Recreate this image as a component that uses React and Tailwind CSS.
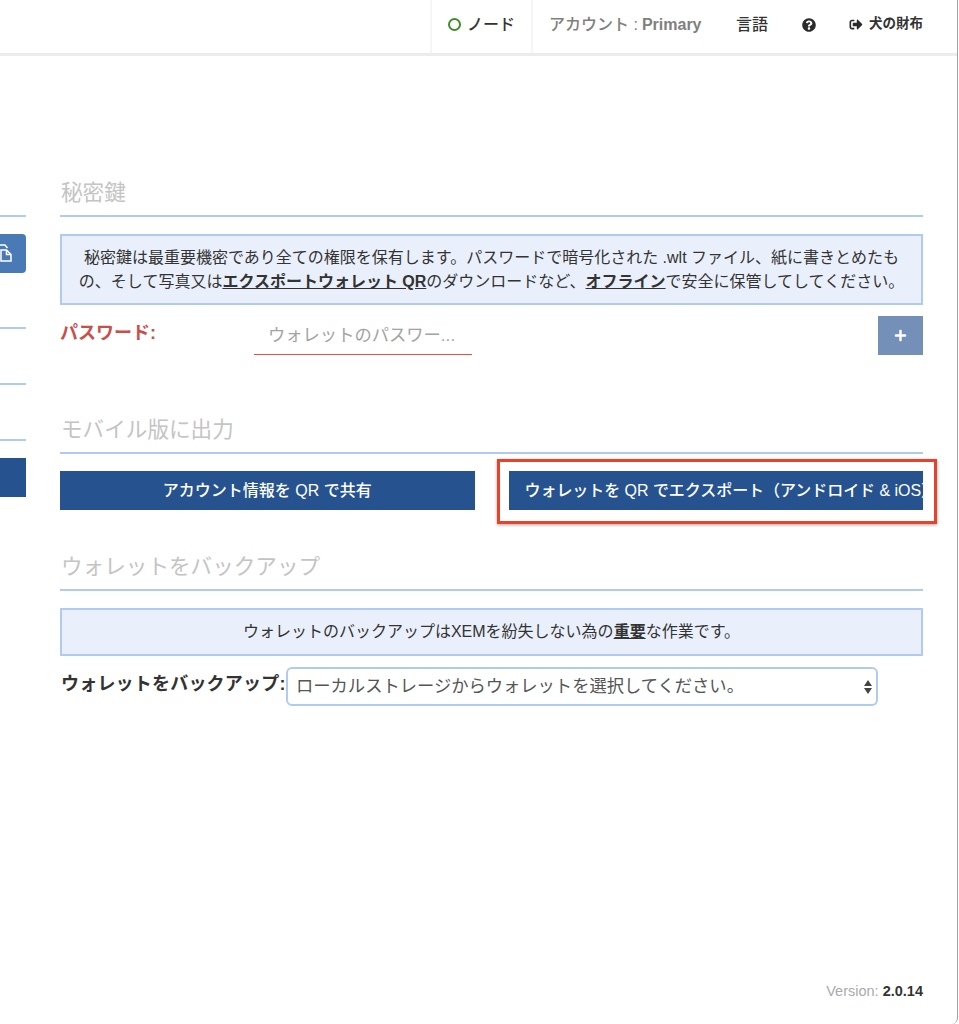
import { FaQuestionCircle, FaSignOutAlt, FaPlus } from "react-icons/fa";

const Heading = ({ children }) => (
  <h2 className="h-[38px] border-b-2 border-b-[#b0caf3] text-[21.6px] leading-[28px] text-[#c4c4c4] pl-px">
    {children}
  </h2>
);

const LeftColumn = () => (
  <div className="w-[26px] shrink-0">
    <div className="h-[2px] bg-[#b0caf3] mt-[159px]" />
    <div className="mt-[17px] h-[39px] bg-[#4a7ab5] rounded-r-[4px] flex items-center text-white">
      {/* files icon, cut off by the left edge */}
      <svg width="12" height="18" viewBox="0 0 12 18" fill="none" stroke="currentColor" strokeWidth="1.5" className="-mt-[1px]">
        <path d="M-1 1 H5 L7.5 4" />
        <path d="M1 6 H6.5 L11 10.5 V17 H1 Z" />
        <path d="M6.5 6 V10.5 H11" />
      </svg>
    </div>
    <div className="h-[2px] bg-[#b0caf3] mt-[54px]" />
    <div className="h-[2px] bg-[#b0caf3] mt-[54px]" />
    <div className="h-[2px] bg-[#b0caf3] mt-[54px]" />
    <div className="mt-[17px] h-[39px] bg-[#26538f]" />
  </div>
);

export default function App() {
  return (
    <div className="font-['Liberation_Sans','Noto_Sans_CJK_JP',sans-serif] w-[958px] h-[1024px] relative bg-white border-r border-[#a0a0a0] rounded-br-[6px] overflow-hidden text-[#333]">
      {/* top bar */}
      <header className="h-[56px] border-b-[3px] border-b-[#ececec] flex justify-end pr-[34px]">
        <div className="flex items-center h-full pb-[4px] border-x-2 border-x-[#f6f6f6] w-[103px] pl-[16px] gap-[6px] text-[16px] font-medium">
          <span className="w-[13px] h-[13px] rounded-full border-2 border-[#3f8d27]" />
          ノード
        </div>
        <div className="flex items-center h-full pb-[4px] pl-[16px] w-[203px] text-[16px] font-medium text-[#808080]">
          アカウント : <b className="ml-[4px]">Primary</b>
        </div>
        <div className="flex items-center h-full pb-[4px] w-[66px] text-[16px] font-medium">言語</div>
        <div className="flex items-center h-full pb-[4px] w-[47px]">
          <FaQuestionCircle className="w-[14px] h-[14px] text-[#2b2b2b]" />
        </div>
        <div className="flex items-center h-full pb-[4px] gap-[6px] text-[13.5px] font-bold">
          <FaSignOutAlt className="w-[14px] h-[13px] text-[#2b2b2b]" />
          犬の財布
        </div>
      </header>

      <div className="flex gap-[34px]">
        <LeftColumn />
        <main className="w-[863px] pt-[123px]">
          <Heading>秘密鍵</Heading>
          <div className="mt-[17px] h-[71px] border-2 border-[#b0caf3] bg-[#eaf0fb] flex items-center justify-center text-center text-[16px] leading-[24px] px-[9px]">
            <p>
              秘密鍵は最重要機密であり全ての権限を保有します。パスワードで暗号化された .wlt ファイル、紙に書きとめたもの、そして写真又は
              <b className="underline">エクスポートウォレット QR</b>
              のダウンロードなど、
              <b className="underline">オフライン</b>
              で安全に保管してしてください。
            </p>
          </div>

          <div className="mt-[11px] flex items-start">
            <label className="w-[194px] text-[18px] leading-[34px] font-bold text-[#c9504a]">パスワード:</label>
            <div className="w-[218px] h-[39px] border-b border-b-[#d9534f] pl-[14px] text-[17.3px] leading-[38px] text-[#a3a3a3] whitespace-nowrap">
              ウォレットのパスワー...
            </div>
            <button className="ml-auto w-[45px] h-[39px] bg-[#7590b8] text-white flex items-center justify-center">
              <FaPlus className="w-[13px] h-[13px]" />
            </button>
          </div>

          <div className="mt-[61px]">
            <Heading>モバイル版に出力</Heading>
          </div>
          <div className="mt-[17px] grid grid-cols-2 gap-[34px]">
            <button className="h-[39px] bg-[#26538f] text-white text-[16px] font-medium">
              アカウント情報を QR で共有
            </button>
            <div className="relative">
              <button className="w-full h-[39px] bg-[#26538f] text-white text-[16px] tracking-[-0.05px] font-medium pl-[16px] text-left whitespace-nowrap overflow-hidden">
                ウォレットを QR でエクスポート（アンドロイド &amp; iOS）
              </button>
              {/* annotation drawn over the screenshot */}
              <div className="absolute -left-[12px] -right-[14px] -top-[12px] -bottom-[14px] border-[3px] border-[#e8432a] shadow-[0_1px_3px_rgba(0,0,0,0.35)]" />
            </div>
          </div>

          <div className="mt-[43px]">
            <Heading>ウォレットをバックアップ</Heading>
          </div>
          <div className="mt-[17px] h-[48px] border-2 border-[#b0caf3] bg-[#eaf0fb] flex items-center justify-center text-[16px]">
            <p>
              ウォレットのバックアップはXEMを紛失しない為の<b className="underline">重要</b>な作業です。
            </p>
          </div>
          <div className="mt-[11px] flex items-center">
            <label className="w-[226px] pb-[4px] text-[18px] tracking-[0.2px] font-bold whitespace-nowrap pl-px">ウォレットをバックアップ:</label>
            <div className="w-[592px] h-[39px] border-2 border-[#b0caf3] rounded-[6px] pl-[8px] pr-[3px] flex items-center justify-between text-[17.3px] text-[#555]">
              ローカルストレージからウォレットを選択してください。
              <svg width="10" height="16" viewBox="0 0 10 16" className="text-[#444]">
                <path d="M5 1 L9 7 L1 7 Z M5 15 L9 9 L1 9 Z" fill="currentColor" />
              </svg>
            </div>
          </div>
        </main>
      </div>

      <div className="absolute right-[34px] top-[983px] text-[14.5px] leading-[16px] text-[#aaa]">
        Version: <b className="text-[#333]">2.0.14</b>
      </div>
    </div>
  );
}
